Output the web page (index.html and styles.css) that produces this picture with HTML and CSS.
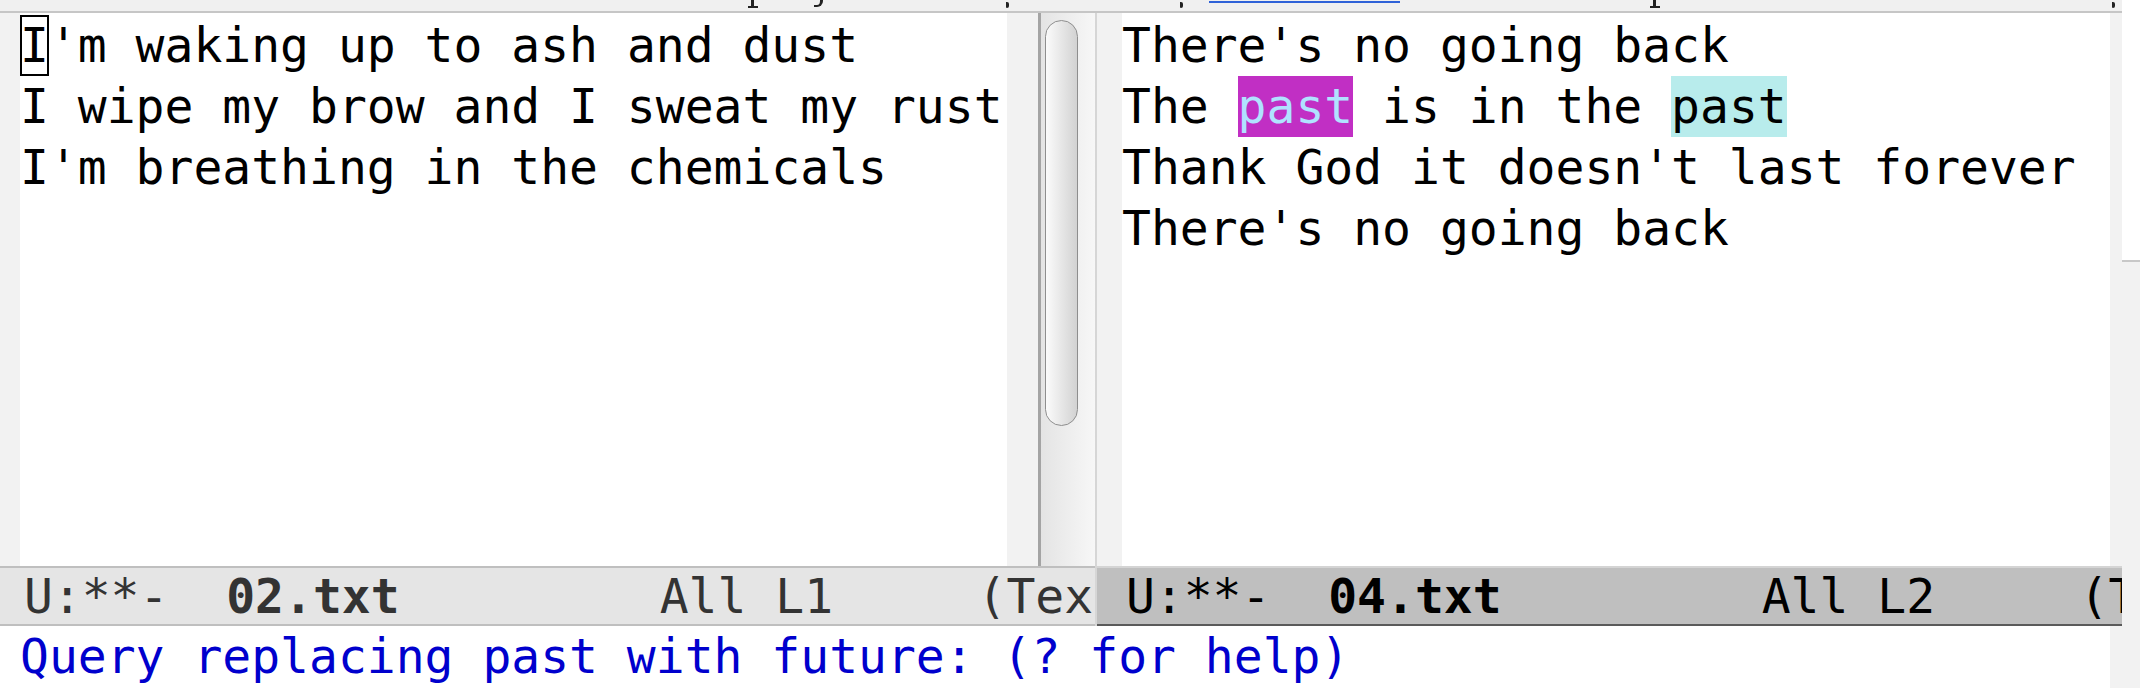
FILE: index.html
```html
<!DOCTYPE html>
<html>
<head>
<meta charset="utf-8">
<title>Emacs query-replace</title>
<link rel="stylesheet" href="styles.css">
</head>
<body>
<div class="frame">
  <div class="topstrip">
    <span class="mark mark-p m1"></span>
    <span class="mark mark-y m2"></span>
    <span class="mark mark-c m3"></span>
    <span class="mark mark-c m4"></span>
    <span class="link-line"></span>
    <span class="mark mark-p m5"></span>
    <span class="mark mark-c m6"></span>
  </div>
  <div class="windows">
    <div class="win win-left">
      <div class="win-body">
        <div class="fringe fringe-l"></div>
        <div class="text">
          <div class="line"><span class="cursor">I</span>'m waking up to ash and dust</div>
          <div class="line">I wipe my brow and I sweat my rust</div>
          <div class="line">I'm breathing in the chemicals</div>
        </div>
        <div class="fringe fringe-r"></div>
        <div class="scrollbar"><div class="thumb"></div></div>
      </div>
      <div class="modeline inactive"> U:**-  <b>02.txt</b>         All L1     (Tex</div>
    </div>
    <div class="win win-right">
      <div class="win-body">
        <div class="fringe fringe-l"></div>
        <div class="text">
          <div class="line">There's no going back</div>
          <div class="line">The <span class="hl hl-cur">past</span> is in the <span class="hl hl-lazy">past</span></div>
          <div class="line">Thank God it doesn't last forever</div>
          <div class="line">There's no going back</div>
        </div>
        <div class="fringe fringe-r"></div>
      </div>
      <div class="modeline active"> U:**-  <b>04.txt</b>         All L2     (T</div>
    </div>
  </div>
  <div class="minibuffer">
    <div class="mb-text">Query replacing past with future: (? for help)</div>
    <div class="fringe fringe-mb"></div>
  </div>
</div>
<div class="outside">
  <div class="outside-top"></div>
  <div class="outside-bottom"></div>
</div>
</body>
</html>
```
FILE: styles.css
```css
* { box-sizing: border-box; }
html, body { margin: 0; padding: 0; }
body {
  width: 2140px;
  height: 688px;
  overflow: hidden;
  display: flex;
  background: #fff;
  font-family: "DejaVu Sans Mono", monospace;
  font-size: 48px;
}
.frame {
  width: 2122px;
  height: 688px;
  display: flex;
  flex-direction: column;
}

/* strip at the top: bottom edge of the page above */
.topstrip {
  height: 13px;
  flex: none;
  background: #f0f0f0;
  border-bottom: 2px solid #c6c6c6;
  display: flex;
  align-items: flex-start;
  overflow: hidden;
}
.mark { display: block; flex: none; }
.mark-p {
  width: 10px;
  height: 8px;
  border-bottom: 2px solid #222;
  background: linear-gradient(to right, transparent 3px, #222 3px, #222 6px, transparent 6px);
}
.mark-y {
  width: 9px;
  height: 7px;
  border-right: 3px solid #222;
  border-bottom: 2px solid #222;
  border-bottom-right-radius: 6px;
}
.mark-c {
  width: 3px;
  height: 6px;
  margin-top: 2px;
  background: #222;
  border-radius: 0 2px 2px 1px;
}
.m1 { margin-left: 748px; }
.m2 { margin-left: 56px; }
.m3 { margin-left: 183px; }
.m4 { margin-left: 171px; }
.link-line {
  display: block;
  flex: none;
  width: 191px;
  height: 2px;
  margin-top: 1px;
  margin-left: 26px;
  background: #2f62d8;
}
.m5 { margin-left: 250px; }
.m6 { margin-left: 452px; }

/* windows */
.windows {
  display: flex;
  height: 613px;
  flex: none;
}
.win {
  display: flex;
  flex-direction: column;
}
.win-left { width: 1095px; }
.win-right { width: 1027px; border-left: 2px solid #d6d6d6; }
.win-body {
  flex: 1;
  display: flex;
  min-height: 0;
}
.fringe { background: #f2f2f2; flex: none; }
.win-left .fringe-l { width: 20px; }
.win-left .text { width: 987px; }
.win-left .fringe-r { width: 31px; }
.win-right .fringe-l { width: 25px; }
.win-right .text { flex: 1; }
.win-right .fringe-r { width: 12px; }

.text {
  background: #fff;
  color: #000;
  padding-top: 2px;
  line-height: 61px;
  overflow: hidden;
}
.line { height: 61px; white-space: pre; }

.cursor {
  display: inline-block;
  box-shadow: inset 0 0 0 2px #000;
}
.hl { display: inline-block; }
.hl-cur { background: #c12fc4; color: #b0e2ff; }
.hl-lazy { background: #b8ecec; color: #000; }

.scrollbar {
  width: 57px;
  flex: none;
  border-left: 3px solid #a4a4a4;
  background: linear-gradient(to right, #e4e4e4, #f7f7f7);
  padding: 7px 0 0 4px;
}
.thumb {
  width: 33px;
  height: 406px;
  border: 1px solid #8e8e8e;
  border-radius: 17px;
  background: linear-gradient(to right, #fbfbfb, #d2d2d2);
}

/* mode lines */
.modeline {
  height: 60px;
  flex: none;
  border-top: 2px solid;
  border-bottom: 2px solid;
  line-height: 56px;
  white-space: pre;
  overflow: hidden;
}
.modeline b { font-weight: bold; }
.inactive {
  background: #e5e5e5;
  color: #333;
  border-color: #bfbfbf;
  text-indent: -5px;
}
.active {
  background: #bfbfbf;
  color: #000;
  border-top-color: #d4d4d4;
  border-bottom-color: #5a5a5a;
}

/* minibuffer */
.minibuffer {
  height: 62px;
  flex: none;
  display: flex;
}
.mb-text {
  flex: 1;
  padding-left: 20px;
  line-height: 61px;
  white-space: pre;
  color: #0000cd;
  background: #fff;
}
.fringe-mb { width: 12px; }

/* area right of the frame */
.outside {
  width: 18px;
  display: flex;
  flex-direction: column;
}
.outside-top {
  height: 262px;
  background: #fff;
  border-bottom: 2px solid #c8c8c8;
}
.outside-bottom {
  flex: 1;
  background: #f2f2f2;
}
```
